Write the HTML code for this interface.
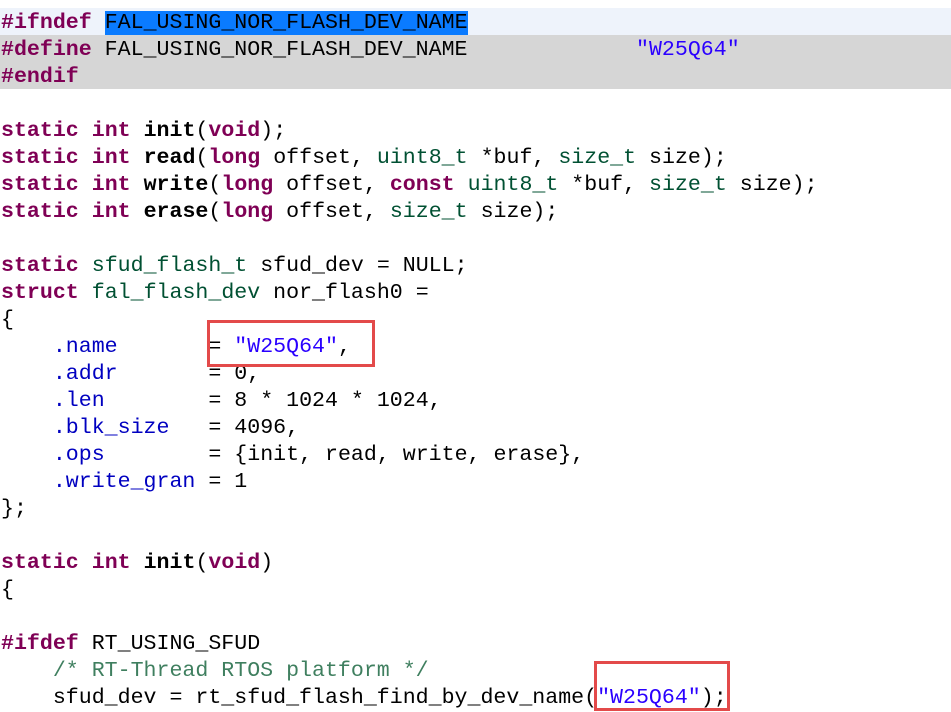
<!DOCTYPE html>
<html><head><meta charset="utf-8"><style>
html,body{margin:0;padding:0;background:#fff;width:951px;height:708px;overflow:hidden}
pre{margin:0;position:absolute;left:1px;top:10px;font-family:"Liberation Mono","DejaVu Sans Mono",monospace;font-size:21.6px;line-height:27px;color:#000}
.k{color:#7f0055;font-weight:bold}
.f{font-weight:bold}
.v{color:#0000c0}
.s{color:#2a00ff}
.t{color:#005032}
.c{color:#3f7f5f}
.sel{background:#0a7bff;color:#000}
.gray{position:absolute;left:0;top:35px;width:951px;height:54px;background:#d6d6d6}
.ifl{position:absolute;left:0;top:8px;width:951px;height:27px;background:#eef3fb}
.box{position:absolute;border:3px solid #e34a4a;box-sizing:border-box}
</style></head><body>
<div class="ifl"></div>
<div class="gray"></div>
<pre><span class="k">#ifndef</span> <span class="sel">FAL_USING_NOR_FLASH_DEV_NAME</span>
<span class="k">#define</span> FAL_USING_NOR_FLASH_DEV_NAME             <span class="s">"W25Q64"</span>
<span class="k">#endif</span>

<span class="k">static</span> <span class="k">int</span> <span class="f">init</span>(<span class="k">void</span>);
<span class="k">static</span> <span class="k">int</span> <span class="f">read</span>(<span class="k">long</span> offset, <span class="t">uint8_t</span> *buf, <span class="t">size_t</span> size);
<span class="k">static</span> <span class="k">int</span> <span class="f">write</span>(<span class="k">long</span> offset, <span class="k">const</span> <span class="t">uint8_t</span> *buf, <span class="t">size_t</span> size);
<span class="k">static</span> <span class="k">int</span> <span class="f">erase</span>(<span class="k">long</span> offset, <span class="t">size_t</span> size);

<span class="k">static</span> <span class="t">sfud_flash_t</span> sfud_dev = NULL;
<span class="k">struct</span> <span class="t">fal_flash_dev</span> nor_flash0 =
{
    <span class="v">.name</span>       = <span class="s">"W25Q64"</span>,
    <span class="v">.addr</span>       = 0,
    <span class="v">.len</span>        = 8 * 1024 * 1024,
    <span class="v">.blk_size</span>   = 4096,
    <span class="v">.ops</span>        = {init, read, write, erase},
    <span class="v">.write_gran</span> = 1
};

<span class="k">static</span> <span class="k">int</span> <span class="f">init</span>(<span class="k">void</span>)
{

<span class="k">#ifdef</span> RT_USING_SFUD
    <span class="c">/* RT-Thread RTOS platform */</span>
    sfud_dev = rt_sfud_flash_find_by_dev_name(<span class="s">"W25Q64"</span>);
</pre>
<div class="box" style="left:207px;top:320px;width:168px;height:47px"></div>
<div class="box" style="left:594px;top:661px;width:136px;height:50px"></div>
</body></html>
